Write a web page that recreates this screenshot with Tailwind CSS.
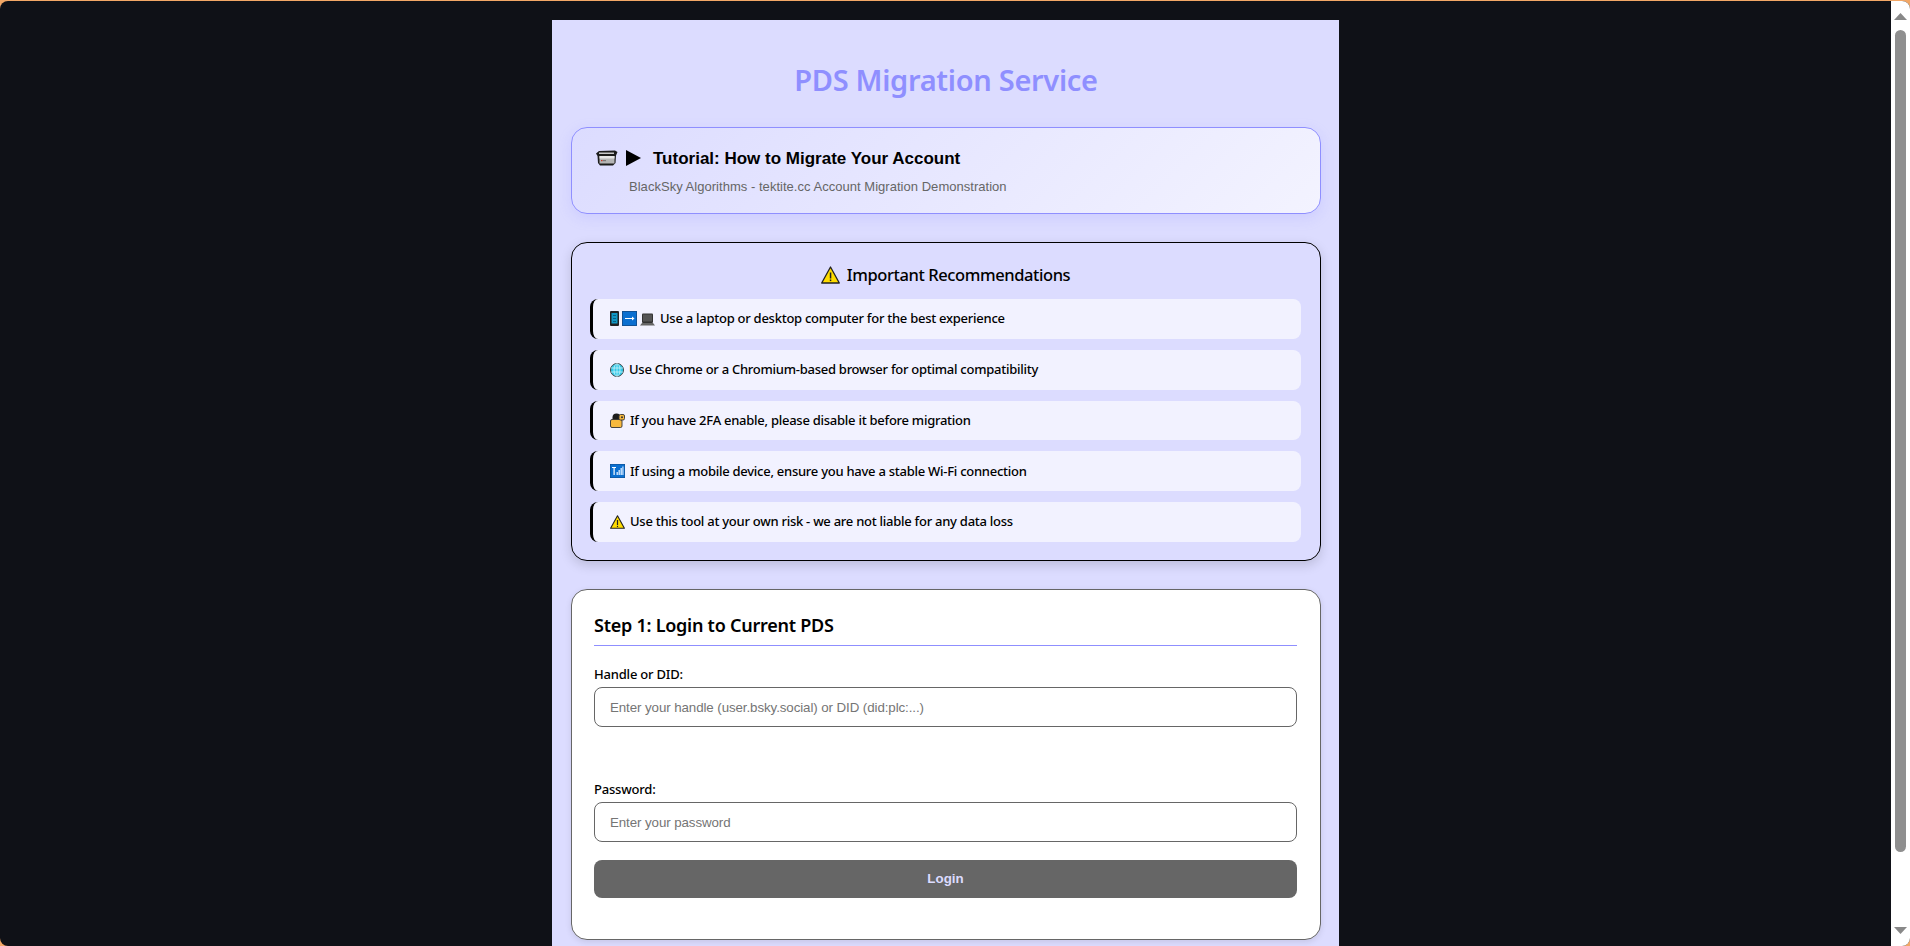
<!DOCTYPE html>
<html lang="en">
<head>
<meta charset="utf-8">
<title>PDS Migration Service</title>
<script src="https://cdn.jsdelivr.net/npm/@tailwindcss/browser@4"></script>
</head>
<body class="bg-[#f2a766] overflow-hidden">
<div class="h-[946px] pt-px">
  <div class="h-[945px] flex bg-[#0f1117] rounded-[8px] overflow-hidden">
    <!-- page column -->
    <div class="flex-1 min-w-0 h-full overflow-hidden">
      <main class="w-[787px] h-[1200px] mx-auto mt-[19px] pl-[19px] pr-[18px] pt-[40px] bg-[#dcdcff] font-['Noto_Sans',sans-serif] text-black">
        <h1 class="text-center text-[#8f8fff] text-[29px] tracking-[-0.3px] leading-[40px] font-semibold mb-[27px]">PDS Migration Service</h1>

        <!-- tutorial -->
        <section class="h-[87px] pt-[20px] pl-[23px] border border-[#8f8fff] rounded-[16px] bg-linear-[135deg] from-[#dcdcff] to-[#f3f3ff] shadow-[0_4px_14px_rgba(143,143,255,0.2)] font-['Liberation_Sans',sans-serif]">
          <div class="flex items-center h-[20px]">
            <svg class="w-[23px] h-[16px]" viewBox="0 0 23 16">
              <path d="M1 3.5 L4 1 L20 .5 L22.5 2 L21 5.5 L20.5 13 L18 15.5 L5 15.5 L3 13 L2.5 6 Z" fill="#1c1c1c"/>
              <rect x="4.5" y="6" width="15" height="7.5" fill="#b5b5b5"/>
              <rect x="4.5" y="6" width="15" height="2.5" fill="#e6e6e6"/>
              <rect x="6" y="10" width="1.6" height="1.2" fill="#c0392b"/>
              <rect x="8" y="10" width="3" height="1.2" fill="#777"/>
              <rect x="4" y="2.5" width="15" height="1.5" fill="#c8c8c8"/>
            </svg>
            <svg class="w-[15px] h-[16px] ml-[8px]" viewBox="0 0 15 16"><polygon points="0,0 15,8 0,16" fill="#000"/></svg>
            <span class="ml-[12px] text-[17px] font-bold leading-[20px] pt-px">Tutorial: How to Migrate Your Account</span>
          </div>
          <p class="mt-[10px] pl-[34px] text-[13px] tracking-[0.03px] leading-[18px] text-[#666]">BlackSky Algorithms - tektite.cc Account Migration Demonstration</p>
        </section>

        <!-- recommendations -->
        <section class="mt-[28px] h-[319px] pt-[20px] pl-[18px] pr-[19px] border border-black rounded-[16px] bg-[#dcdcff] shadow-[0_4px_12px_rgba(0,0,0,0.15)]">
          <h3 class="flex items-center justify-center h-[24px] mb-[12px] text-[16.5px] tracking-[-0.4px] font-medium">
            <svg class="w-[19px] h-[18px] mr-[7px]" viewBox="0 0 19 18"><path d="M9.5 1 L18.3 17 L0.7 17 Z" fill="#ffdc00" stroke="#222" stroke-width="1.3" stroke-linejoin="round"/><rect x="8.8" y="6.5" width="1.5" height="6" fill="#222"/><rect x="8.8" y="13.5" width="1.5" height="1.6" fill="#222"/></svg>
            Important Recommendations
          </h3>
          <ul class="flex flex-col gap-[11px] text-[13px] tracking-[-0.26px] font-medium">
            <li class="flex items-center h-[39.8px] pl-[17px] bg-[#f2f2ff] border-l-[3px] border-black rounded-[8px]">
              <svg class="w-[9px] h-[15px]" viewBox="0 0 9 15"><rect width="9" height="15" rx="1" fill="#222"/><rect x="1.5" y="2" width="6" height="10.5" fill="#1197c4"/><rect x="3" y="4" width="3" height="1" fill="#0b5f80"/><rect x="3" y="7" width="3" height="1" fill="#0b5f80"/><rect x="3" y="10" width="3" height="1" fill="#0b5f80"/></svg>
              <svg class="w-[15px] h-[15px] ml-[3px]" viewBox="0 0 15 15"><rect width="15" height="15" fill="#0b6fd0"/><rect x="0.5" y="0.5" width="14" height="14" fill="none" stroke="#124f8f" stroke-width="0.9"/><rect x="3" y="7" width="7" height="1" fill="#fff"/><polygon points="10,5.5 12.5,7.5 10,9.5" fill="#fff"/></svg>
              <svg class="w-[15px] h-[13px] ml-[3px] mt-[2px]" viewBox="0 0 15 13"><rect x="2" y="0.5" width="11" height="9.5" rx="1" fill="#333"/><rect x="3" y="1.5" width="9" height="7" fill="#555"/><path d="M2 10 L13 10 L15 12.5 L0 12.5 Z" fill="#666"/></svg>
              <span class="ml-[5px]">Use a laptop or desktop computer for the best experience</span>
            </li>
            <li class="flex items-center h-[39.8px] pl-[17px] bg-[#f2f2ff] border-l-[3px] border-black rounded-[8px]">
              <svg class="w-[14px] h-[14px]" viewBox="0 0 14 14"><circle cx="7" cy="7" r="6.5" fill="#35c9e8" stroke="#333" stroke-width="0.9"/><ellipse cx="7" cy="7" rx="3" ry="6.3" fill="none" stroke="#d9f6fc" stroke-width="0.7"/><path d="M1 5 H13 M1 9 H13 M7 .7 V13.3" stroke="#d9f6fc" stroke-width="0.7"/></svg>
              <span class="ml-[5px]">Use Chrome or a Chromium-based browser for optimal compatibility</span>
            </li>
            <li class="flex items-center h-[39.8px] pl-[17px] bg-[#f2f2ff] border-l-[3px] border-black rounded-[8px]">
              <svg class="w-[15px] h-[15px]" viewBox="0 0 15 15"><path d="M2.5 8 V4.5 a4 4 0 0 1 8 0 V8 Z" fill="#1c1c1c"/><rect x="0.5" y="6.5" width="11.5" height="8" rx="1.5" fill="#f7b93e" stroke="#333" stroke-width="0.9"/><rect x="9" y="1.5" width="5.5" height="5.5" rx="1.5" fill="#f7b93e" stroke="#333" stroke-width="0.9"/><circle cx="12" cy="4.2" r="1" fill="#333"/></svg>
              <span class="ml-[5px]">If you have 2FA enable, please disable it before migration</span>
            </li>
            <li class="flex items-center h-[39.8px] pl-[17px] bg-[#f2f2ff] border-l-[3px] border-black rounded-[8px]">
              <svg class="w-[15px] h-[14px]" viewBox="0 0 15 14"><rect width="15" height="14" fill="#0b6fd0" stroke="#134a86" stroke-width="1"/><rect x="2" y="3" width="4" height="1" fill="#fff"/><rect x="3.5" y="3" width="1.2" height="8" fill="#fff"/><rect x="6.5" y="8" width="1.4" height="3" fill="#cfe6ff"/><rect x="8.5" y="6" width="1.4" height="5" fill="#cfe6ff"/><rect x="10.5" y="4" width="1.4" height="7" fill="#cfe6ff"/><rect x="12.3" y="2.5" width="1.2" height="8.5" fill="#cfe6ff"/></svg>
              <span class="ml-[5px]">If using a mobile device, ensure you have a stable Wi-Fi connection</span>
            </li>
            <li class="flex items-center h-[39.8px] pl-[17px] bg-[#f2f2ff] border-l-[3px] border-black rounded-[8px]">
              <svg class="w-[15px] h-[14px]" viewBox="0 0 15 14"><path d="M7.5 .8 L14.4 13.3 L.6 13.3 Z" fill="#ffdc00" stroke="#222" stroke-width="1.1" stroke-linejoin="round"/><rect x="6.9" y="5" width="1.2" height="5" fill="#222"/><rect x="6.9" y="10.8" width="1.2" height="1.3" fill="#222"/></svg>
              <span class="ml-[5px]">Use this tool at your own risk - we are not liable for any data loss</span>
            </li>
          </ul>
        </section>

        <!-- step 1 -->
        <section class="mt-[28px] h-[351px] pt-[21px] pl-[22px] pr-[23px] border border-[#666] rounded-[16px] bg-white shadow-[0_2px_6px_rgba(0,0,0,0.1)]">
          <h2 class="text-[18px] tracking-[-0.25px] leading-[28px] font-semibold pb-[6px] border-b border-[#8f8fff]">Step 1: Login to Current PDS</h2>
          <label class="block mt-[19px] mb-[4px] text-[13px] tracking-[-0.2px] leading-[18px] font-medium" for="identifier">Handle or DID:</label>
          <input id="identifier" type="text" placeholder="Enter your handle (user.bsky.social) or DID (did:plc:...)" class="block w-full h-[40px] px-[15px] border border-[#666] rounded-[8px] font-['Liberation_Sans',sans-serif] text-[13.33px] tracking-[-0.09px] placeholder-[#757575]">
          <label class="block mt-[53px] mb-[4px] text-[13px] tracking-[-0.2px] leading-[18px] font-medium" for="password">Password:</label>
          <input id="password" type="password" placeholder="Enter your password" class="block w-full h-[40px] px-[15px] border border-[#666] rounded-[8px] font-['Liberation_Sans',sans-serif] text-[13.33px] tracking-[-0.09px] placeholder-[#757575]">
          <button class="block w-full h-[38px] mt-[18px] bg-[#666] text-[#dcdcff] rounded-[8px] font-['Liberation_Sans',sans-serif] text-[13.33px] font-bold">Login</button>
        </section>
      </main>
    </div>
    <!-- scrollbar -->
    <div class="w-[19px] h-full bg-white flex flex-col items-center">
      <svg class="w-[13px] h-[7px] mt-[12px] shrink-0" viewBox="0 0 13 7"><polygon points="6.5,0 13,7 0,7" fill="#888"/></svg>
      <div class="w-[11px] h-[822px] mt-[10px] shrink-0 rounded-full bg-[#8f8f8f]"></div>
      <svg class="w-[13px] h-[7px] mt-[75px] shrink-0" viewBox="0 0 13 7"><polygon points="0,0 13,0 6.5,7" fill="#888"/></svg>
    </div>
  </div>
</div>
</body>
</html>
